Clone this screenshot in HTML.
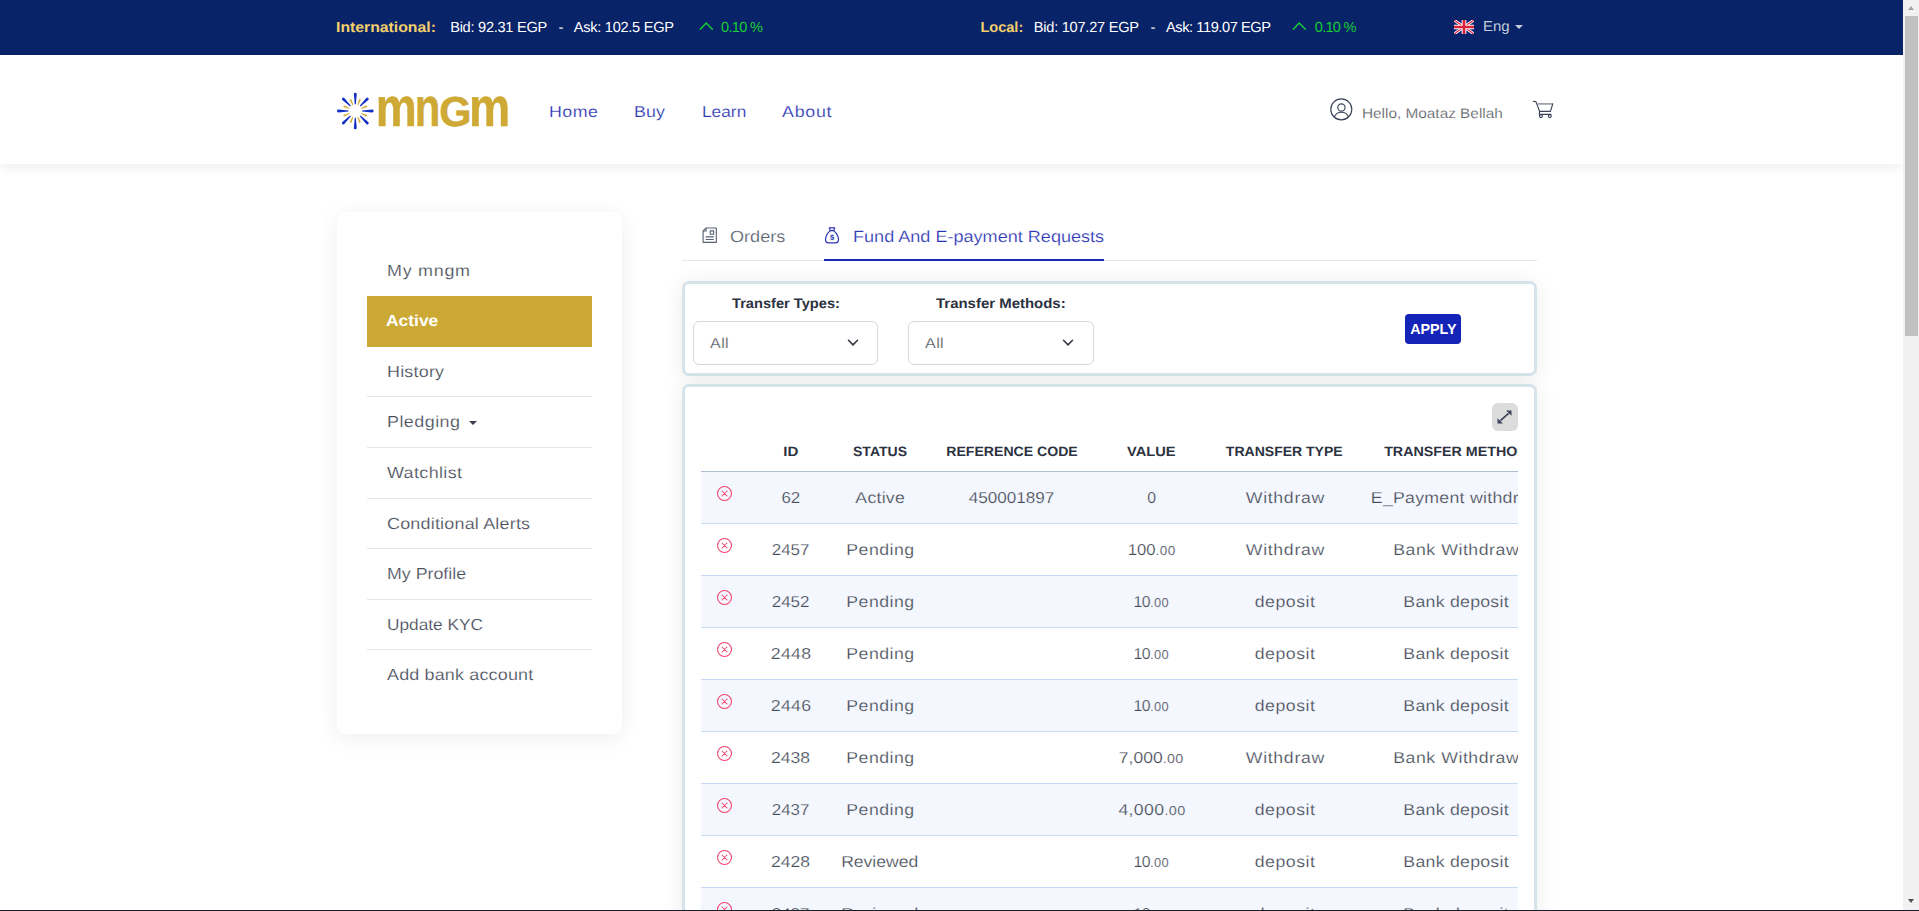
<!DOCTYPE html>
<html lang="en">
<head>
<meta charset="utf-8">
<title>mngm - Fund And E-payment Requests</title>
<style>
*{box-sizing:border-box;margin:0;padding:0}
html,body{width:1919px;height:911px;overflow:hidden;background:#fff}
body{position:relative;font-family:"Liberation Sans",sans-serif;color:#4a4f57;text-rendering:geometricPrecision}
a{text-decoration:none;color:inherit}
ul{list-style:none}
.abs{position:absolute;white-space:nowrap}
.f{display:inline-block;white-space:nowrap}

/* ---------- top ticker bar ---------- */
#topbar{position:absolute;left:0;top:0;width:1903px;height:55px;background:#082367;color:#fff;font-size:14.6px;line-height:20px}
#topbar .t{position:absolute;top:18px;white-space:nowrap}
#topbar .lbl{color:#f3cf6c;font-weight:700}
#topbar .up{color:#17cf34}
#topbar svg{position:absolute}
#topbar .cv{position:absolute;left:1515px;top:24.8px;width:0;height:0;border-left:4px solid transparent;border-right:4px solid transparent;border-top:4px solid #c5ccdc}

/* ---------- header ---------- */
#header{position:absolute;left:0;top:55px;width:1903px;height:109px;background:#fff;box-shadow:0 3px 12px rgba(0,0,0,.07)}
#logo{position:absolute;left:336px;top:35px;width:176px;height:42px}
#nav a{position:absolute;top:48.1px;font-size:15.9px;line-height:20px;color:#2631b0;white-space:nowrap}
#hello{position:absolute;left:1362.4px;top:48.3px;font-size:13.9px;line-height:20px;color:#565a61;white-space:nowrap}

/* ---------- sidebar ---------- */
#side{position:absolute;left:337px;top:212px;width:285px;height:522px;background:#fff;border-radius:9px;box-shadow:0 4px 22px rgba(0,0,0,.07);padding:33.6px 30px 0}
#side li{position:relative;height:50.6px;border-bottom:1px solid #e5e6e8;padding:16.1px 0 0 19.6px;font-size:16px;line-height:20px;color:#454b57;white-space:nowrap}
#side li:first-child{padding-top:16.5px}
#side li:first-child,#side li.on,#side li.last{border-bottom-color:transparent}
#side li.on{background:#cca935;color:#fff;font-weight:700;padding-top:15.6px;padding-left:19.3px}
#side li a{display:inline-block}
#side .caret{position:absolute;left:102px;top:24px;width:0;height:0;border-left:4px solid transparent;border-right:4px solid transparent;border-top:4.5px solid #3a3f4a}

/* ---------- tabs ---------- */
#tabs{position:absolute;left:682px;top:210px;width:855px;height:51px;border-bottom:1px solid #e4e9ee}
.tab{font-size:16.3px;line-height:20px;color:#59606e}
.tab.act{color:#2a33b3}
.uline{position:absolute;left:142px;top:48.7px;width:280px;height:2.3px;background:#1a27b3}

/* ---------- cards ---------- */
.card{position:absolute;left:682px;width:855px;background:#fff;border:3px solid #d6e3eb;border-radius:7px;box-shadow:0 2px 22px rgba(0,0,0,.08)}
#filter{top:281px;height:95px}
.flab{font-size:13.9px;line-height:18px;font-weight:700;color:#2c3240}
.sel{position:absolute;top:37px;width:185px;height:44px;border:1px solid #d5dae0;border-radius:6px;padding:12px 0 0 15.8px;font-size:14.4px;line-height:20px;color:#50555d}
.sel svg{position:absolute;left:152.6px;top:17.1px}
#apply{position:absolute;left:720px;top:30px;width:56px;height:30px;border:0;border-radius:4px;background:#1524b8;color:#fff;font:700 13.8px/30px "Liberation Sans",sans-serif;text-align:center;padding:.6px 0 0 0}

#tcard{top:384px;height:560px;border-bottom-left-radius:0;border-bottom-right-radius:0}
#expand{position:absolute;left:807px;top:16px;width:26px;height:28px;border-radius:6px;background:#dcdcdc}
#expand svg{position:absolute;left:5px;top:7px}
#twrap{position:absolute;left:16px;top:44px;width:817px;height:520px;overflow:hidden}
table{border-collapse:collapse;table-layout:fixed;width:848px}
table .f{position:relative;left:.6px}
th{height:40px;padding:2px 0 0;font-size:13.5px;font-weight:700;color:#2c3240;text-align:center;white-space:nowrap;border-bottom:1px solid #aebdd3;vertical-align:middle}
td{height:52px;padding:4px 0 0;font-size:15.8px;color:#454b57;text-align:center;white-space:nowrap;border-bottom:1px solid #c6dcf4;vertical-align:middle}
td small{font-size:12.9px;letter-spacing:.35px}
tbody tr:nth-child(odd) td{background:#f4f7fe}
td.ic{position:relative}
td .x{position:absolute;left:14.7px;top:13.3px}

/* ---------- fake scrollbar + bottom edge ---------- */
#sb{position:absolute;left:1903px;top:0;width:16px;height:911px;background:#f1f1f1}
#sb .thumb{position:absolute;left:2px;top:16px;width:13px;height:320px;background:#c1c1c1}
#sb .au{position:absolute;left:4.8px;top:6px;width:0;height:0;border-left:3.6px solid transparent;border-right:3.6px solid transparent;border-bottom:4px solid #a3a3a3}
#sb .ad{position:absolute;left:4.8px;top:899px;width:0;height:0;border-left:3.6px solid transparent;border-right:3.6px solid transparent;border-top:4px solid #505050}
#edge{position:absolute;left:0;top:910px;width:1919px;height:1px;background:#1b1d24}

/* thin the strokes a little: Montserrat Regular is lighter than Liberation Sans */
#nav a,#hello,#side li a,.tab,.sel .f{-webkit-text-stroke:.2px #fff}
#side li.on a{-webkit-text-stroke:0}
td .f{-webkit-text-stroke:.2px #fff}
tbody tr:nth-child(odd) td .f{-webkit-text-stroke-color:#f4f7fe}
</style>
</head>
<body>

<div id="topbar">
  <span class="t lbl" style="left:336.4px;letter-spacing:0px;transform:scaleX(1.081);transform-origin:0 50%">International:</span>
  <span class="t " style="left:450.2px;letter-spacing:-0.27px">Bid: 92.31 EGP</span>
  <span class="t " style="left:558.4px;letter-spacing:0">-</span>
  <span class="t " style="left:573.8px;letter-spacing:-0.28px">Ask: 102.5 EGP</span>
  <svg style="left:697.5px;top:21.4px" width="17" height="12" viewBox="0 0 17 12"><path d="M2.3 8.2L8.2 2.1L14.3 8.2" fill="none" stroke="#17cf34" stroke-width="1.4" stroke-linecap="round" stroke-linejoin="miter"/></svg>
  <span class="t up" style="left:721.0px;letter-spacing:-0.67px">0.10 %</span>
  <span class="t lbl" style="left:980.4px;letter-spacing:-0.02px">Local:</span>
  <span class="t " style="left:1033.8px;letter-spacing:-0.25px">Bid: 107.27 EGP</span>
  <span class="t " style="left:1150.4px;letter-spacing:0">-</span>
  <span class="t " style="left:1166.0px;letter-spacing:-0.42px">Ask: 119.07 EGP</span>
  <svg style="left:1291.4px;top:21.4px" width="17" height="12" viewBox="0 0 17 12"><path d="M2.3 8.2L8.2 2.1L14.3 8.2" fill="none" stroke="#17cf34" stroke-width="1.4" stroke-linecap="round" stroke-linejoin="miter"/></svg>
  <span class="t up" style="left:1314.8px;letter-spacing:-0.75px">0.10 %</span>
  <svg style="left:1454px;top:20.3px" width="20" height="14" viewBox="0 0 60 42"><clipPath id="fc"><rect width="60" height="42" rx="2"/></clipPath><g clip-path="url(#fc)"><rect width="60" height="42" fill="#0c2272"/><path d="M0 0L60 42M60 0L0 42" stroke="#fff" stroke-width="8.5"/><path d="M0 0L60 42M60 0L0 42" stroke="#d8203a" stroke-width="3.2"/><path d="M30 0V42M0 21H60" stroke="#fff" stroke-width="14"/><path d="M30 0V42M0 21H60" stroke="#d8203a" stroke-width="8"/></g></svg>
  <span class="t" style="left:1482.6px;top:17px;color:#c5ccdc;font-size:14.4px;letter-spacing:0px;transform:scaleX(1.042);transform-origin:0 50%">Eng</span>
  <i class="cv"></i>
</div>

<div id="header">
  <a id="logo" title="mngm"><svg role="img" aria-label="mngm" width="176" height="42" viewBox="0 0 176 42">
    <g transform="translate(19.3 21)"><path transform="rotate(0)" d="M6.8 -.55L16.9 -1.45A1.45 1.45 0 0 1 16.9 1.45L6.8 .55Z" fill="#1531c4"/><path transform="rotate(22.5)" d="M6.3 -.45L11.9 -.95A.95 .95 0 0 1 11.9 .95L6.3 .45Z" fill="#d2ad3c"/><path transform="rotate(45)" d="M6.8 -.55L16.9 -1.45A1.45 1.45 0 0 1 16.9 1.45L6.8 .55Z" fill="#1531c4"/><path transform="rotate(67.5)" d="M6.3 -.45L11.9 -.95A.95 .95 0 0 1 11.9 .95L6.3 .45Z" fill="#d2ad3c"/><path transform="rotate(90)" d="M6.8 -.55L16.9 -1.45A1.45 1.45 0 0 1 16.9 1.45L6.8 .55Z" fill="#1531c4"/><path transform="rotate(112.5)" d="M6.3 -.45L11.9 -.95A.95 .95 0 0 1 11.9 .95L6.3 .45Z" fill="#d2ad3c"/><path transform="rotate(135)" d="M6.8 -.55L16.9 -1.45A1.45 1.45 0 0 1 16.9 1.45L6.8 .55Z" fill="#1531c4"/><path transform="rotate(157.5)" d="M6.3 -.45L11.9 -.95A.95 .95 0 0 1 11.9 .95L6.3 .45Z" fill="#d2ad3c"/><path transform="rotate(180)" d="M6.8 -.55L16.9 -1.45A1.45 1.45 0 0 1 16.9 1.45L6.8 .55Z" fill="#1531c4"/><path transform="rotate(202.5)" d="M6.3 -.45L11.9 -.95A.95 .95 0 0 1 11.9 .95L6.3 .45Z" fill="#d2ad3c"/><path transform="rotate(225)" d="M6.8 -.55L16.9 -1.45A1.45 1.45 0 0 1 16.9 1.45L6.8 .55Z" fill="#1531c4"/><path transform="rotate(247.5)" d="M6.3 -.45L11.9 -.95A.95 .95 0 0 1 11.9 .95L6.3 .45Z" fill="#d2ad3c"/><path transform="rotate(270)" d="M6.8 -.55L16.9 -1.45A1.45 1.45 0 0 1 16.9 1.45L6.8 .55Z" fill="#1531c4"/><path transform="rotate(292.5)" d="M6.3 -.45L11.9 -.95A.95 .95 0 0 1 11.9 .95L6.3 .45Z" fill="#d2ad3c"/><path transform="rotate(315)" d="M6.8 -.55L16.9 -1.45A1.45 1.45 0 0 1 16.9 1.45L6.8 .55Z" fill="#1531c4"/><path transform="rotate(337.5)" d="M6.3 -.45L11.9 -.95A.95 .95 0 0 1 11.9 .95L6.3 .45Z" fill="#d2ad3c"/></g>
    <text font-family="Liberation Sans,sans-serif" font-weight="700" fill="#cfa935" stroke="#cfa935" stroke-width=".5" stroke-linejoin="round" y="36"><tspan x="39.8" font-size="54.6" textLength="41" lengthAdjust="spacingAndGlyphs">m</tspan><tspan x="78.7" font-size="54.6" textLength="25.6" lengthAdjust="spacingAndGlyphs">n</tspan><tspan x="103.3" y="35.7" font-size="41.8" textLength="32.3" lengthAdjust="spacingAndGlyphs">G</tspan><tspan x="133" y="36" font-size="54.6" textLength="41.2" lengthAdjust="spacingAndGlyphs">m</tspan></text>
    </svg></a>
  <div id="nav">
    <a style="left:548.5px;letter-spacing:0.45px;transform:scaleX(1.120);transform-origin:0 50%">Home</a>
    <a style="left:634.4px;letter-spacing:0.1px;transform:scaleX(1.120);transform-origin:0 50%">Buy</a>
    <a style="left:702.0px;letter-spacing:0px;transform:scaleX(1.089);transform-origin:0 50%">Learn</a>
    <a style="left:782.3px;letter-spacing:0.68px;transform:scaleX(1.120);transform-origin:0 50%">About</a>
  </div>
  <svg class="abs" style="left:1329px;top:42px" width="25" height="25" viewBox="0 0 25 25"><g fill="none" stroke="#3b4257" stroke-width="1.15"><circle cx="12.3" cy="12.3" r="10.5"/><circle cx="12.4" cy="10.5" r="3.65"/><path d="M5.3 20C6.7 16.5 9.3 15.2 12.4 15.2C15.5 15.2 18.1 16.5 19.5 20"/></g></svg>
  <span id="hello" style="letter-spacing:0px;transform:scaleX(1.105);transform-origin:0 50%">Hello, Moataz Bellah</span>
  <svg class="abs" style="left:1532px;top:44px" width="23" height="21" viewBox="0 0 23 21"><g fill="none" stroke="#3b4257" stroke-width="1.15" stroke-linejoin="round" stroke-linecap="round"><path d="M5.6 4.9H20.8" stroke="#8b9298" stroke-width="1.5" stroke-linecap="butt"/><path d="M1.3 2.3L3.9 2.6L7.6 12.4H18.4L20.8 4.9"/><path d="M7.6 12.4L7.3 15.3H18.9"/><circle cx="8.9" cy="17.1" r="1.45"/><circle cx="17.8" cy="17.1" r="1.45"/></g></svg>
</div>

<aside id="side">
  <ul>
    <li><a style="letter-spacing:0.65px;transform:scaleX(1.120);transform-origin:0 50%">My mngm</a></li>
    <li class="on"><a style="letter-spacing:0px;transform:scaleX(1.089);transform-origin:0 50%">Active</a></li>
    <li><a style="letter-spacing:0.19px;transform:scaleX(1.120);transform-origin:0 50%">History</a></li>
    <li><a style="letter-spacing:0.41px;transform:scaleX(1.120);transform-origin:0 50%">Pledging</a><i class="caret"></i></li>
    <li><a style="letter-spacing:0.33px;transform:scaleX(1.120);transform-origin:0 50%">Watchlist</a></li>
    <li><a style="letter-spacing:0.19px;transform:scaleX(1.120);transform-origin:0 50%">Conditional Alerts</a></li>
    <li><a style="letter-spacing:0px;transform:scaleX(1.111);transform-origin:0 50%">My Profile</a></li>
    <li><a style="letter-spacing:0px;transform:scaleX(1.079);transform-origin:0 50%">Update KYC</a></li>
    <li class="last"><a style="letter-spacing:0.16px;transform:scaleX(1.120);transform-origin:0 50%">Add bank account</a></li>
  </ul>
</aside>

<div id="tabs">
  <svg class="abs" style="left:20px;top:16.9px" width="15.6" height="16.3" viewBox="0 0 17 17" preserveAspectRatio="none"><g fill="none" stroke="#566072" stroke-width="1.2" stroke-linejoin="round"><path d="M4.4 1H15.6V16H1.2V4.2Z"/><path d="M4.4 1V4.2H1.2"/><rect x="9" y="4.1" width="3.7" height="3.5"/><path d="M4 10.3H12.8M4 13H12.8"/></g></svg>
  <span class="abs tab" style="left:48.1px;top:17.2px;letter-spacing:0px;transform:scaleX(1.110);transform-origin:0 50%">Orders</span>
  <svg class="abs" style="left:142px;top:16px" width="16" height="18" viewBox="0 0 16 18"><g fill="none" stroke="#2a33b3" stroke-width="1.2" stroke-linejoin="round" stroke-linecap="round"><path d="M5.3 1.9H10.7L9.7 4.6H6.3Z"/><path d="M6.3 4.6C3.4 7.2 1.5 10.6 1.5 13.5C1.5 15.8 2.8 16.8 4.6 16.8H11.4C13.2 16.8 14.5 15.8 14.5 13.5C14.5 10.6 12.6 7.2 9.7 4.6"/></g><text x="8" y="14.4" text-anchor="middle" font-family="Liberation Sans,sans-serif" font-size="7.6" font-weight="700" fill="#2a33b3">$</text></svg>
  <span class="abs tab act" style="left:171.1px;top:17.2px;letter-spacing:0px;transform:scaleX(1.110);transform-origin:0 50%">Fund And E-payment Requests</span>
  <i class="uline"></i>
</div>

<section id="filter" class="card">
  <label class="abs flab" style="left:46.7px;top:9.5px;letter-spacing:0px;transform:scaleX(1.054);transform-origin:0 50%">Transfer Types:</label>
  <div class="sel" style="left:8.2px"><span class="f" style="letter-spacing:0.35px;transform:scaleX(1.120);transform-origin:0 50%">All</span><svg width="12" height="8" viewBox="0 0 12 8"><path d="M1.5 1.2L6 5.9L10.5 1.2" fill="none" stroke="#343a40" stroke-width="1.55" stroke-linecap="round" stroke-linejoin="round"/></svg></div>
  <label class="abs flab" style="left:251.3px;top:9.5px;letter-spacing:0px;transform:scaleX(1.077);transform-origin:0 50%">Transfer Methods:</label>
  <div class="sel" style="left:223px;width:186px"><span class="f" style="letter-spacing:0.35px;transform:scaleX(1.120);transform-origin:0 50%">All</span><svg width="12" height="8" viewBox="0 0 12 8"><path d="M1.5 1.2L6 5.9L10.5 1.2" fill="none" stroke="#343a40" stroke-width="1.55" stroke-linecap="round" stroke-linejoin="round"/></svg></div>
  <button id="apply"><span class="f" style="letter-spacing:0px;transform:scaleX(1.039);transform-origin:50% 50%">APPLY</span></button>
</section>

<section id="tcard" class="card">
  <div id="expand"><svg width="15" height="14" viewBox="0 0 15 14"><path d="M3.4 10.7L11.6 3.3" stroke="#3b4358" stroke-width="1.7" fill="none"/><path d="M9.1 .5H14.5V5.7Z M.5 8.3V13.5H5.9Z" fill="#3b4358"/></svg></div>
  <div id="twrap">
  <table>
    <colgroup><col style="width:46px"><col style="width:86px"><col style="width:93px"><col style="width:170px"><col style="width:110px"><col style="width:156px"><col style="width:187px"></colgroup>
    <thead><tr><th></th><th><span class="f" style="letter-spacing:0.07px;margin-right:-0.07px;transform:scaleX(1.120);transform-origin:50% 50%">ID</span></th><th><span class="f" style="letter-spacing:0px;transform:scaleX(1.038);transform-origin:50% 50%">STATUS</span></th><th><span class="f" style="letter-spacing:0px;transform:scaleX(1.043);transform-origin:50% 50%">REFERENCE CODE</span></th><th><span class="f" style="letter-spacing:0px;transform:scaleX(1.084);transform-origin:50% 50%">VALUE</span></th><th><span class="f" style="letter-spacing:0px;transform:scaleX(1.038);transform-origin:50% 50%">TRANSFER TYPE</span></th><th><span class="f" style="letter-spacing:0px;transform:scaleX(1.057);transform-origin:50% 50%">TRANSFER METHOD</span></th></tr></thead>
    <tbody>
      <tr><td class="ic"><svg class="x" width="17" height="17" viewBox="0 0 17 17"><g fill="none" stroke="#f2416d" stroke-width="1.05" stroke-linecap="round"><circle cx="8.5" cy="8.5" r="7"/><path d="M6 6L11 11M11 6L6 11"/></g></svg></td><td><span class="f" style="letter-spacing:0px;transform:scaleX(1.067);transform-origin:50% 50%">62</span></td><td><span class="f" style="letter-spacing:0.23px;margin-right:-0.23px;transform:scaleX(1.120);transform-origin:50% 50%">Active</span></td><td><span class="f" style="letter-spacing:0px;transform:scaleX(1.084);transform-origin:50% 50%">450001897</span></td><td><span class="f" style="letter-spacing:0">0</span></td><td><span class="f" style="letter-spacing:0.61px;margin-right:-0.61px;transform:scaleX(1.120);transform-origin:50% 50%">Withdraw</span></td><td><span class="f" style="letter-spacing:0.25px;margin-right:-0.25px;transform:scaleX(1.120);transform-origin:50% 50%">E_Payment withdraw</span></td></tr>
      <tr><td class="ic"><svg class="x" width="17" height="17" viewBox="0 0 17 17"><g fill="none" stroke="#f2416d" stroke-width="1.05" stroke-linecap="round"><circle cx="8.5" cy="8.5" r="7"/><path d="M6 6L11 11M11 6L6 11"/></g></svg></td><td><span class="f" style="letter-spacing:0px;transform:scaleX(1.074);transform-origin:50% 50%">2457</span></td><td><span class="f" style="letter-spacing:0.42px;margin-right:-0.42px;transform:scaleX(1.120);transform-origin:50% 50%">Pending</span></td><td></td><td><span class="f" style="letter-spacing:0px;transform:scaleX(1.058);transform-origin:50% 50%">100<small>.00</small></span></td><td><span class="f" style="letter-spacing:0.61px;margin-right:-0.61px;transform:scaleX(1.120);transform-origin:50% 50%">Withdraw</span></td><td><span class="f" style="letter-spacing:0.48px;margin-right:-0.48px;transform:scaleX(1.120);transform-origin:50% 50%">Bank Withdraw</span></td></tr>
      <tr><td class="ic"><svg class="x" width="17" height="17" viewBox="0 0 17 17"><g fill="none" stroke="#f2416d" stroke-width="1.05" stroke-linecap="round"><circle cx="8.5" cy="8.5" r="7"/><path d="M6 6L11 11M11 6L6 11"/></g></svg></td><td><span class="f" style="letter-spacing:0px;transform:scaleX(1.074);transform-origin:50% 50%">2452</span></td><td><span class="f" style="letter-spacing:0.42px;margin-right:-0.42px;transform:scaleX(1.120);transform-origin:50% 50%">Pending</span></td><td></td><td><span class="f" style="letter-spacing:-0.58px;margin-right:0.58px">10<small>.00</small></span></td><td><span class="f" style="letter-spacing:0.47px;margin-right:-0.47px;transform:scaleX(1.120);transform-origin:50% 50%">deposit</span></td><td><span class="f" style="letter-spacing:0.24px;margin-right:-0.24px;transform:scaleX(1.120);transform-origin:50% 50%">Bank deposit</span></td></tr>
      <tr><td class="ic"><svg class="x" width="17" height="17" viewBox="0 0 17 17"><g fill="none" stroke="#f2416d" stroke-width="1.05" stroke-linecap="round"><circle cx="8.5" cy="8.5" r="7"/><path d="M6 6L11 11M11 6L6 11"/></g></svg></td><td><span class="f" style="letter-spacing:0.26px;margin-right:-0.26px;transform:scaleX(1.120);transform-origin:50% 50%">2448</span></td><td><span class="f" style="letter-spacing:0.42px;margin-right:-0.42px;transform:scaleX(1.120);transform-origin:50% 50%">Pending</span></td><td></td><td><span class="f" style="letter-spacing:-0.58px;margin-right:0.58px">10<small>.00</small></span></td><td><span class="f" style="letter-spacing:0.47px;margin-right:-0.47px;transform:scaleX(1.120);transform-origin:50% 50%">deposit</span></td><td><span class="f" style="letter-spacing:0.24px;margin-right:-0.24px;transform:scaleX(1.120);transform-origin:50% 50%">Bank deposit</span></td></tr>
      <tr><td class="ic"><svg class="x" width="17" height="17" viewBox="0 0 17 17"><g fill="none" stroke="#f2416d" stroke-width="1.05" stroke-linecap="round"><circle cx="8.5" cy="8.5" r="7"/><path d="M6 6L11 11M11 6L6 11"/></g></svg></td><td><span class="f" style="letter-spacing:0.26px;margin-right:-0.26px;transform:scaleX(1.120);transform-origin:50% 50%">2446</span></td><td><span class="f" style="letter-spacing:0.42px;margin-right:-0.42px;transform:scaleX(1.120);transform-origin:50% 50%">Pending</span></td><td></td><td><span class="f" style="letter-spacing:-0.58px;margin-right:0.58px">10<small>.00</small></span></td><td><span class="f" style="letter-spacing:0.47px;margin-right:-0.47px;transform:scaleX(1.120);transform-origin:50% 50%">deposit</span></td><td><span class="f" style="letter-spacing:0.24px;margin-right:-0.24px;transform:scaleX(1.120);transform-origin:50% 50%">Bank deposit</span></td></tr>
      <tr><td class="ic"><svg class="x" width="17" height="17" viewBox="0 0 17 17"><g fill="none" stroke="#f2416d" stroke-width="1.05" stroke-linecap="round"><circle cx="8.5" cy="8.5" r="7"/><path d="M6 6L11 11M11 6L6 11"/></g></svg></td><td><span class="f" style="letter-spacing:0px;transform:scaleX(1.110);transform-origin:50% 50%">2438</span></td><td><span class="f" style="letter-spacing:0.42px;margin-right:-0.42px;transform:scaleX(1.120);transform-origin:50% 50%">Pending</span></td><td></td><td><span class="f" style="letter-spacing:0px;transform:scaleX(1.108);transform-origin:50% 50%">7,000<small>.00</small></span></td><td><span class="f" style="letter-spacing:0.61px;margin-right:-0.61px;transform:scaleX(1.120);transform-origin:50% 50%">Withdraw</span></td><td><span class="f" style="letter-spacing:0.48px;margin-right:-0.48px;transform:scaleX(1.120);transform-origin:50% 50%">Bank Withdraw</span></td></tr>
      <tr><td class="ic"><svg class="x" width="17" height="17" viewBox="0 0 17 17"><g fill="none" stroke="#f2416d" stroke-width="1.05" stroke-linecap="round"><circle cx="8.5" cy="8.5" r="7"/><path d="M6 6L11 11M11 6L6 11"/></g></svg></td><td><span class="f" style="letter-spacing:0px;transform:scaleX(1.067);transform-origin:50% 50%">2437</span></td><td><span class="f" style="letter-spacing:0.42px;margin-right:-0.42px;transform:scaleX(1.120);transform-origin:50% 50%">Pending</span></td><td></td><td><span class="f" style="letter-spacing:0.32px;margin-right:-0.32px;transform:scaleX(1.120);transform-origin:50% 50%">4,000<small>.00</small></span></td><td><span class="f" style="letter-spacing:0.47px;margin-right:-0.47px;transform:scaleX(1.120);transform-origin:50% 50%">deposit</span></td><td><span class="f" style="letter-spacing:0.24px;margin-right:-0.24px;transform:scaleX(1.120);transform-origin:50% 50%">Bank deposit</span></td></tr>
      <tr><td class="ic"><svg class="x" width="17" height="17" viewBox="0 0 17 17"><g fill="none" stroke="#f2416d" stroke-width="1.05" stroke-linecap="round"><circle cx="8.5" cy="8.5" r="7"/><path d="M6 6L11 11M11 6L6 11"/></g></svg></td><td><span class="f" style="letter-spacing:0px;transform:scaleX(1.110);transform-origin:50% 50%">2428</span></td><td><span class="f" style="letter-spacing:0px;transform:scaleX(1.110);transform-origin:50% 50%">Reviewed</span></td><td></td><td><span class="f" style="letter-spacing:-0.58px;margin-right:0.58px">10<small>.00</small></span></td><td><span class="f" style="letter-spacing:0.47px;margin-right:-0.47px;transform:scaleX(1.120);transform-origin:50% 50%">deposit</span></td><td><span class="f" style="letter-spacing:0.24px;margin-right:-0.24px;transform:scaleX(1.120);transform-origin:50% 50%">Bank deposit</span></td></tr>
      <tr><td class="ic"><svg class="x" width="17" height="17" viewBox="0 0 17 17"><g fill="none" stroke="#f2416d" stroke-width="1.05" stroke-linecap="round"><circle cx="8.5" cy="8.5" r="7"/><path d="M6 6L11 11M11 6L6 11"/></g></svg></td><td><span class="f" style="letter-spacing:0px;transform:scaleX(1.067);transform-origin:50% 50%">2427</span></td><td><span class="f" style="letter-spacing:0px;transform:scaleX(1.110);transform-origin:50% 50%">Reviewed</span></td><td></td><td><span class="f" style="letter-spacing:-0.58px;margin-right:0.58px">10<small>.00</small></span></td><td><span class="f" style="letter-spacing:0.47px;margin-right:-0.47px;transform:scaleX(1.120);transform-origin:50% 50%">deposit</span></td><td><span class="f" style="letter-spacing:0.24px;margin-right:-0.24px;transform:scaleX(1.120);transform-origin:50% 50%">Bank deposit</span></td></tr>
    </tbody>
  </table>
  </div>
</section>

<div id="sb"><i class="au"></i><i class="thumb"></i><i class="ad"></i></div>
<div id="edge"></div>
</body>
</html>
